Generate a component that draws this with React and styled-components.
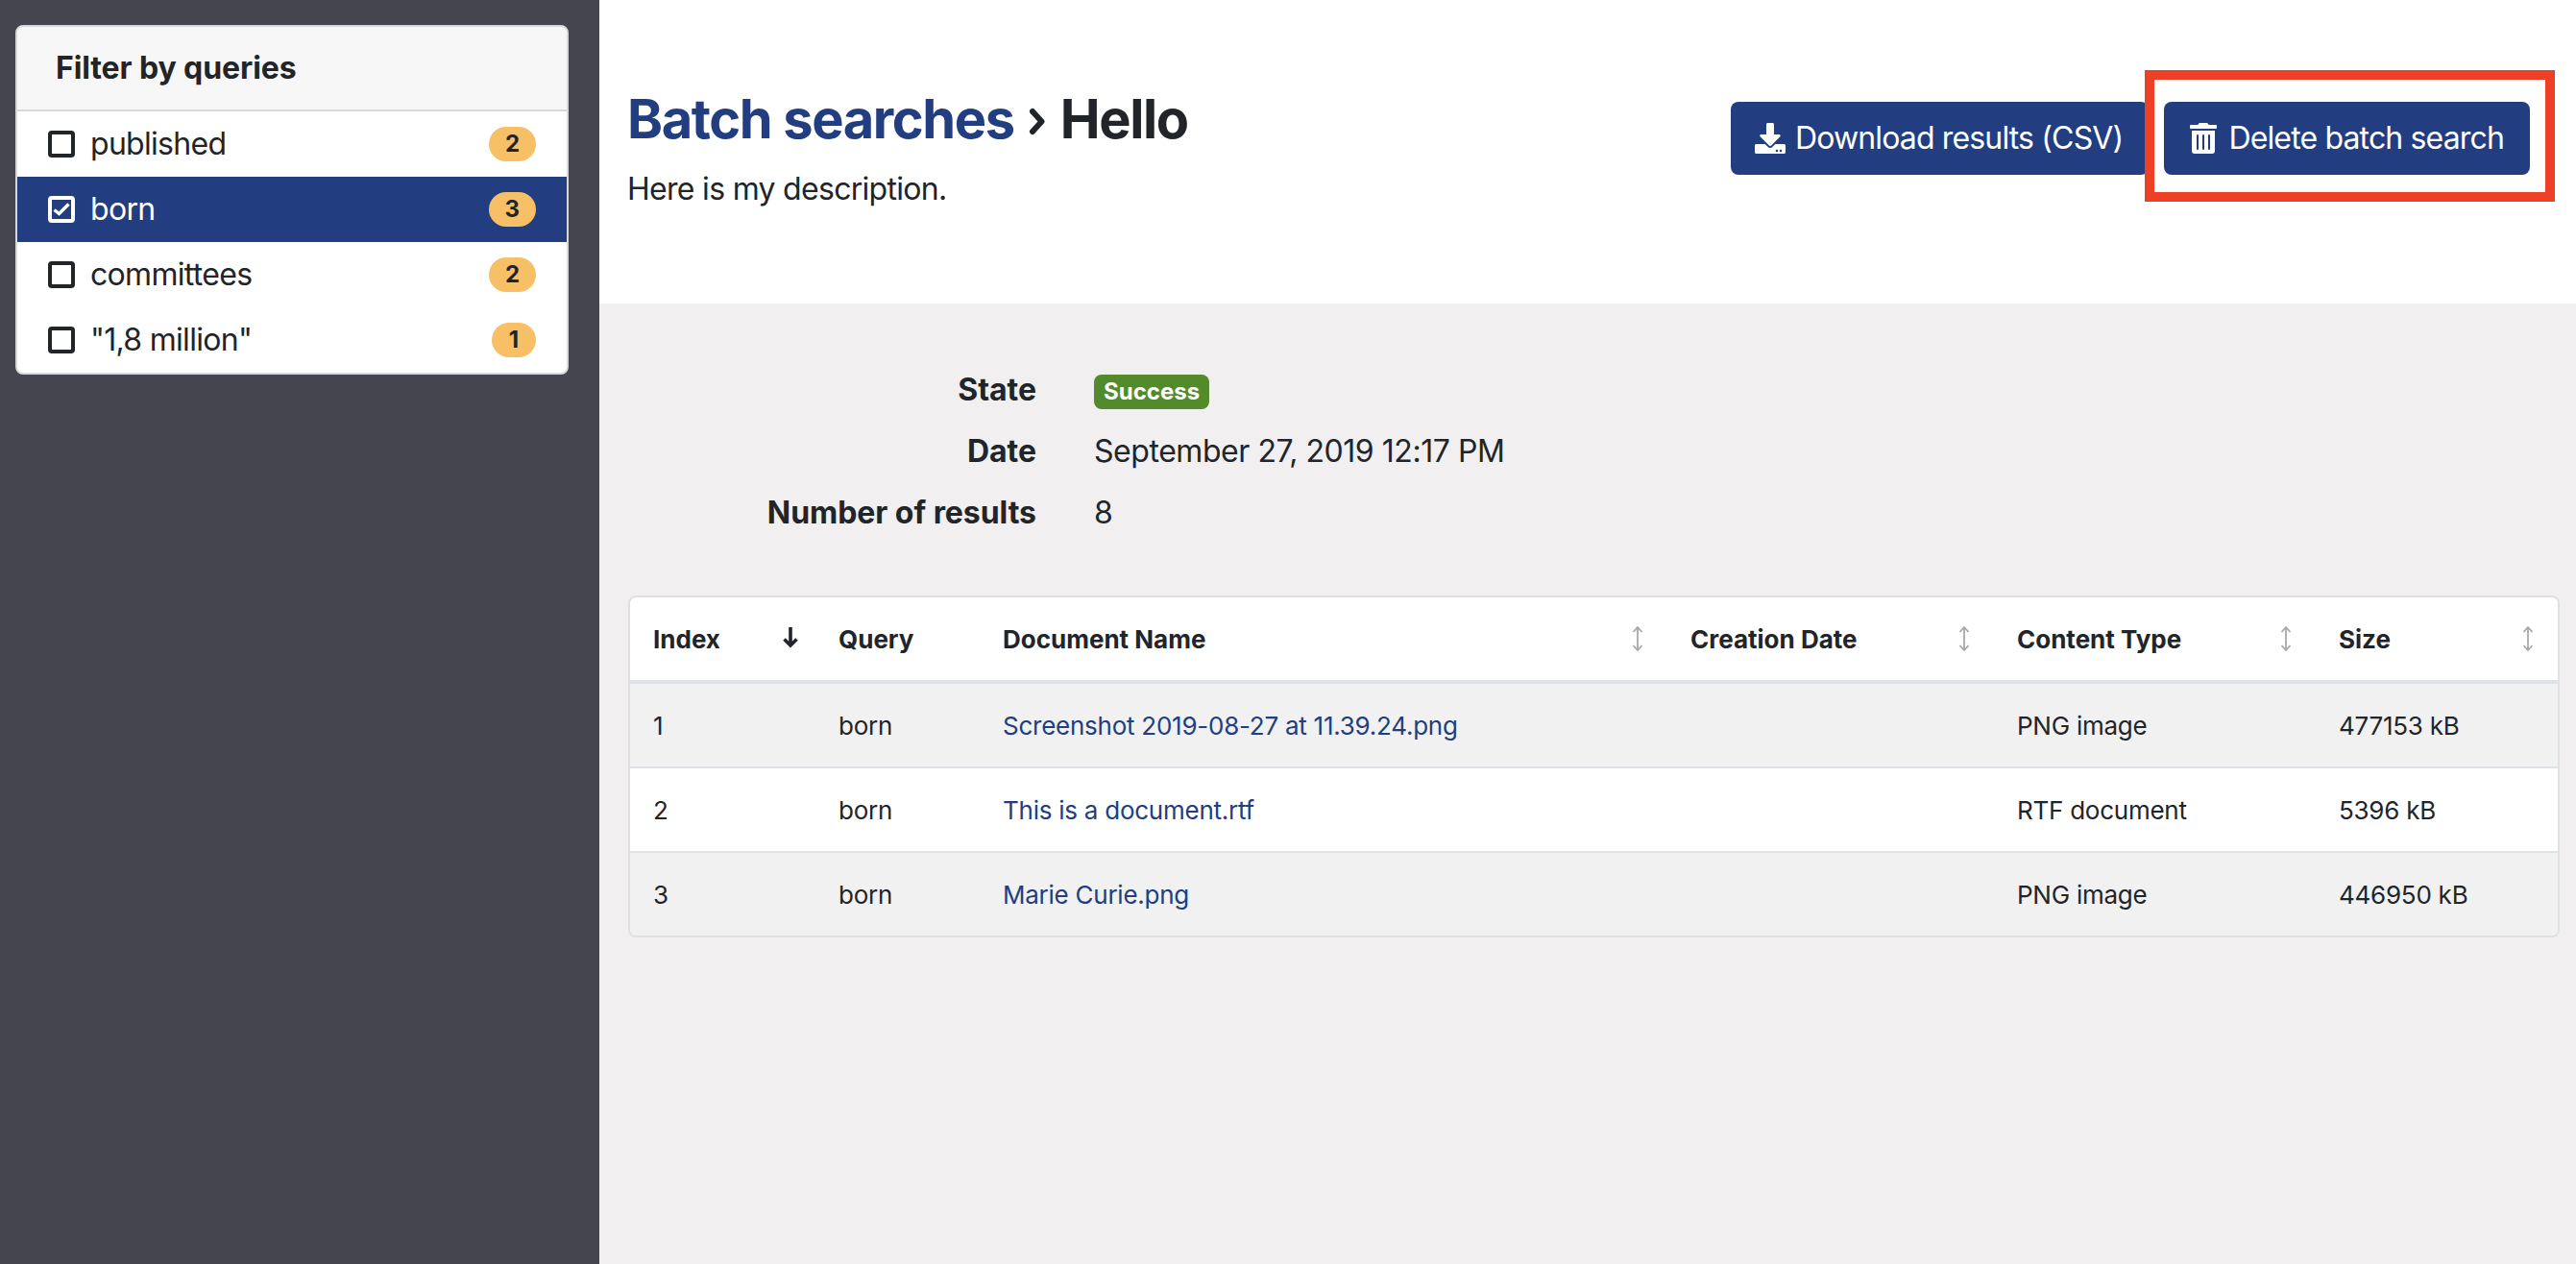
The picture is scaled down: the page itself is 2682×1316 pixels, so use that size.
import React from "react";
import styled, { createGlobalStyle } from "styled-components";
import { FaDownload, FaTrashAlt } from "react-icons/fa";

const Global = createGlobalStyle`
  html, body { margin: 0; padding: 0; height: 100%; }
  body { font-family: Inter, "Liberation Sans", sans-serif; color: #212529; font-size: 32px; line-height: 48px; letter-spacing: -0.7px; }
  #root { height: 100%; }
`;

const Page = styled.div`
  display: flex;
  width: 2682px;
  height: 1316px;
  overflow: hidden;
`;

const Sidebar = styled.aside`
  width: 624px;
  flex: none;
  background: #45454f;
  padding: 26px 32px 0 16px;
  box-sizing: border-box;
`;

const FilterCard = styled.section`
  background: #fff;
  border: 2px solid #d8d8da;
  border-radius: 8px;
  overflow: hidden;
`;

const FilterHeader = styled.h2`
  margin: 0;
  height: 86px;
  padding-left: 40px;
  display: flex;
  align-items: center;
  font-size: 32px;
  font-weight: 700;
  letter-spacing: -0.1px;
  background: #f7f7f7;
  border-bottom: 2px solid #d8d8d8;
`;

const FilterRow = styled.div`
  height: 68px;
  display: flex;
  align-items: center;
  padding: 0 32px;
  background: ${(p) => (p.$active ? "#223e80" : "#fff")};
  color: ${(p) => (p.$active ? "#fff" : "#212529")};
`;

const CheckBox = styled.span`
  width: 28px;
  height: 28px;
  box-sizing: border-box;
  border: 4px solid currentColor;
  border-radius: 4px;
  display: flex;
  align-items: center;
  justify-content: center;
  margin-right: 16px;
  flex: none;
`;

const FilterLabel = styled.span`
  flex: 1;
`;

const CountBadge = styled.span`
  height: 36px;
  min-width: 46px;
  box-sizing: border-box;
  padding: 0 17px;
  border-radius: 18px;
  background: #f7c066;
  color: #212529;
  font-size: 24px;
  font-weight: 700;
  letter-spacing: 0;
  line-height: 36px;
  text-align: center;
`;

const Main = styled.main`
  flex: 1;
  display: flex;
  flex-direction: column;
  background: #f1eff0;
  min-width: 0;
`;

const Header = styled.header`
  position: relative;
  height: 316px;
  background: #fff;
  display: flex;
  justify-content: space-between;
  padding: 91px 48px 0 29px;
  box-sizing: border-box;
`;

const Title = styled.h1`
  margin: 0 0 15px;
  font-size: 56px;
  line-height: 67px;
  font-weight: 700;
  letter-spacing: -1.4px;
  display: flex;
  align-items: center;
`;

const Crumb = styled.span`
  color: #223e80;
`;

const Sep = styled.svg`
  width: 18px;
  height: 29px;
  margin: 4px 15px 0;
  flex: none;
`;

const Description = styled.p`
  margin: 0;
`;

const Actions = styled.div`
  display: flex;
  gap: 16px;
  margin-top: 15px;
  align-items: flex-start;
`;

const Button = styled.button`
  height: 76px;
  padding: 0 27px 0 25px;
  border: 0;
  border-radius: 8px;
  background: #223e80;
  color: #fff;
  font: inherit;
  letter-spacing: -0.85px;
  display: flex;
  align-items: center;
  gap: 10px;
  svg { font-size: 32px; flex: none; }
`;

const Highlight = styled.div`
  position: absolute;
  left: 1609px;
  top: 73px;
  width: 427px;
  height: 137px;
  box-sizing: border-box;
  border: 10px solid #ee4026;
  pointer-events: none;
`;

const Content = styled.div`
  padding: 58px 17px 0 30px;
`;

const Details = styled.dl`
  margin: 0 0 54px;
  display: grid;
  grid-template-columns: 425px 1fr;
  column-gap: 60px;
  grid-auto-rows: 64px;
  align-items: center;
`;

const Term = styled.dt`
  font-weight: 700;
  letter-spacing: -0.05px;
  text-align: right;
`;

const Value = styled.dd`
  margin: 0;
  display: flex;
  align-items: center;
  letter-spacing: -0.45px;
`;

const StateBadge = styled.span`
  height: 36px;
  margin-top: 4px;
  padding: 0 10px;
  background: #528a2c;
  color: #fff;
  border-radius: 8px;
  font-size: 24px;
  font-weight: 700;
  letter-spacing: 0;
  line-height: 36px;
`;

const TableCard = styled.div`
  background: #fff;
  border: 2px solid #e0e0e2;
  border-radius: 8px;
  overflow: hidden;
`;

const Table = styled.table`
  width: 100%;
  table-layout: fixed;
  border-collapse: collapse;
  font-size: 26px;
  line-height: 39px;
  letter-spacing: -0.25px;
`;

const Col = styled.col`
  width: ${(p) => p.$w}px;
`;

const Th = styled.th`
  height: 86px;
  padding: 0 24px;
  text-align: left;
  font-weight: 700;
  letter-spacing: 0;
  border-bottom: 4px solid #dee2e6;
  box-sizing: content-box;
`;

const ThInner = styled.div`
  display: flex;
  align-items: center;
  justify-content: space-between;
`;

const SortIcon = styled.svg`
  width: 16px;
  height: 26px;
  flex: none;
  margin-right: ${(p) => (p.$active ? -6 : -1)}px;
`;

const Tr = styled.tr`
  background: ${(p) => (p.$striped ? "#f1f1f1" : "#fff")};
`;

const Td = styled.td`
  height: 86px;
  padding: 0 24px;
  border-bottom: ${(p) => (p.$last ? "0" : "2px solid #dee2e6")};
`;

const DocLink = styled.a`
  color: #223e80;
  text-decoration: none;
`;

const Check = () => (
  <svg width="18" height="14" viewBox="0 0 18 14" fill="none" stroke="#fff" strokeWidth="3.4">
    <path d="M1.5 7.5 L6.5 11.5 L16.5 1.5" />
  </svg>
);

const columns = [
  { label: "Index", w: 193, icon: "down" },
  { label: "Query", w: 171 },
  { label: "Document Name", w: 716, icon: "both" },
  { label: "Creation Date", w: 340, icon: "both" },
  { label: "Content Type", w: 335, icon: "both" },
  { label: "Size", w: 252, icon: "both" },
];

const rows = [
  ["1", "born", "Screenshot 2019-08-27 at 11.39.24.png", "", "PNG image", "477153 kB"],
  ["2", "born", "This is a document.rtf", "", "RTF document", "5396 kB"],
  ["3", "born", "Marie Curie.png", "", "PNG image", "446950 kB"],
];

const filters = [
  { label: "published", count: 2 },
  { label: "born", count: 3, active: true },
  { label: "committees", count: 2 },
  { label: '"1,8 million"', count: 1 },
];

const Sort = ({ kind }) =>
  kind === "down" ? (
    <SortIcon $active viewBox="0 0 16 26" fill="none" stroke="#212529" strokeWidth="3.6">
      <path d="M8 1 V20 M1.5 13.5 L8 20 L14.5 13.5" />
    </SortIcon>
  ) : (
    <SortIcon viewBox="0 0 16 26" fill="none" stroke="#a9a9a9" strokeWidth="1.8">
      <path d="M8 1 V25 M3.5 6 L8 1 L12.5 6 M3.5 20 L8 25 L12.5 20" />
    </SortIcon>
  );

export default function App() {
  return (
    <Page>
      <Global />
      <Sidebar>
        <FilterCard>
          <FilterHeader>Filter by queries</FilterHeader>
          {filters.map((f) => (
            <FilterRow key={f.label} $active={f.active}>
              <CheckBox>{f.active && <Check />}</CheckBox>
              <FilterLabel>{f.label}</FilterLabel>
              <CountBadge>{f.count}</CountBadge>
            </FilterRow>
          ))}
        </FilterCard>
      </Sidebar>
      <Main>
        <Header>
          <div>
            <Title>
              <Crumb>Batch searches</Crumb>
              <Sep viewBox="0 0 18 29" fill="none" stroke="#212529" strokeWidth="6" strokeLinecap="round" strokeLinejoin="round">
                <path d="M4 4 L13.5 14.5 L4 25" />
              </Sep>
              Hello
            </Title>
            <Description>Here is my description.</Description>
          </div>
          <Actions>
            <Button>
              <FaDownload />
              Download results (CSV)
            </Button>
            <Button>
              <FaTrashAlt />
              Delete batch search
            </Button>
          </Actions>
          <Highlight />
        </Header>
        <Content>
          <Details>
            <Term>State</Term>
            <Value>
              <StateBadge>Success</StateBadge>
            </Value>
            <Term>Date</Term>
            <Value>September 27, 2019 12:17 PM</Value>
            <Term>Number of results</Term>
            <Value>8</Value>
          </Details>
          <TableCard>
            <Table>
              <colgroup>
                {columns.map((c) => (
                  <Col key={c.label} $w={c.w} />
                ))}
              </colgroup>
              <thead>
                <tr>
                  {columns.map((c) => (
                    <Th key={c.label}>
                      <ThInner>
                        {c.label}
                        {c.icon && <Sort kind={c.icon} />}
                      </ThInner>
                    </Th>
                  ))}
                </tr>
              </thead>
              <tbody>
                {rows.map((r, i) => (
                  <Tr key={r[0]} $striped={i % 2 === 0}>
                    {r.map((cell, j) => (
                      <Td key={j} $last={i === rows.length - 1}>
                        {j === 2 ? <DocLink href="#">{cell}</DocLink> : cell}
                      </Td>
                    ))}
                  </Tr>
                ))}
              </tbody>
            </Table>
          </TableCard>
        </Content>
      </Main>
    </Page>
  );
}
